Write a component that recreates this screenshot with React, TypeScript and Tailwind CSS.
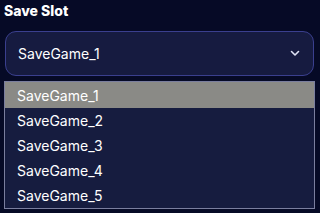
import React from "react";

export default function App() {
  const items = ["SaveGame_1", "SaveGame_2", "SaveGame_3", "SaveGame_4", "SaveGame_5"];
  return (
    <div className="w-[320px] h-[213px] bg-[#060a26] overflow-hidden px-[4px] pt-[2px]" style={{ fontFamily: "Inter, 'Noto Sans', sans-serif" }}>
      <div className="text-[14px] font-extrabold text-white leading-[17px]">Save Slot</div>
      <div className="mt-[12px] ml-[1px] w-[309px] h-[45px] rounded-[11px] border border-[#3a3f8e] bg-[#161b40] flex items-center justify-between pl-[12px] pr-[13px]">
        <span className="text-[14px] text-white">SaveGame_1</span>
        <svg width="10" height="7" viewBox="0 0 10 7" fill="none">
          <path d="M1.5 1.5 L5 5 L8.5 1.5" stroke="#dfe2f5" strokeWidth="1.6" strokeLinecap="round" strokeLinejoin="round" />
        </svg>
      </div>
      <div className="mt-[5px] w-[311px] border border-[#7a7e9e] bg-[#161c3f] flex flex-col">
        {items.map((it, i) => (
          <div
            key={it}
            className={
              i === 0
                ? "h-[26px] flex items-center pl-[12px] bg-[#8a8a86] text-white text-[14px]"
                : "h-[25px] flex items-center pl-[12px] text-white text-[14px]"
            }
          >
            {it}
          </div>
        ))}
      </div>
    </div>
  );
}
